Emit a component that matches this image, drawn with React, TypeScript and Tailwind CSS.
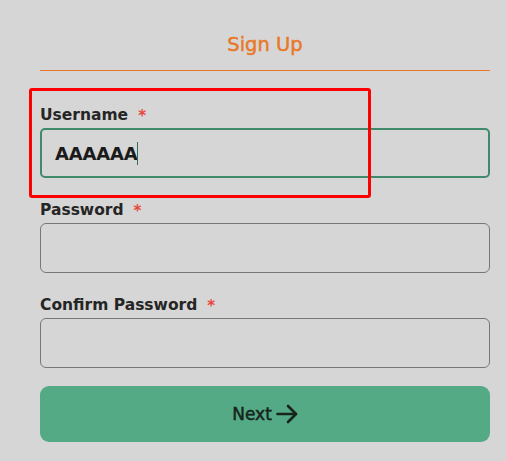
import React from 'react';

function Field({ label, children }: { label: string; children: React.ReactNode }) {
  return (
    <div className="flex flex-col">
      <div className="h-6 flex items-center text-[15.5px] font-semibold text-[#252525]">
        {label}
        <span className="ml-[10px] text-[15px] text-[#e8453c]">*</span>
      </div>
      {children}
    </div>
  );
}

export default function App() {
  return (
    <div className="relative min-h-screen bg-[#d6d6d6] font-['DejaVu_Sans',sans-serif]">
      <div className="ml-10 w-[450px] pt-[31px]">
        <h1 className="h-7 leading-7 text-center text-[19.5px] text-[#e8792a] [-webkit-text-stroke:0.5px_#e8792a]">
          Sign Up
        </h1>
        <div className="mt-[11px] h-px bg-[#e8792a]" />

        <div className="mt-[33px] flex flex-col gap-[21px]">
          <Field label="Username">
            <div className="h-[50px] rounded-[5px] border-2 border-[#3e8a6b] pl-[13px] flex items-center">
              <span className="text-[18px] font-bold text-[#1a1a1a] tracking-[-0.2px]">AAAAAA</span>
              <span className="w-px h-[23px] bg-[#2f6f55]" />
            </div>
          </Field>
          <Field label="Password">
            <div className="h-[50px] rounded-[6px] border border-[#777]" />
          </Field>
          <Field label="Confirm Password">
            <div className="h-[50px] rounded-[6px] border border-[#777]" />
          </Field>
        </div>

        <button className="mt-[18px] w-full h-[56px] rounded-[9px] bg-[#53aa85] flex items-center justify-center gap-[4px] text-[17px] text-[#16241c] [-webkit-text-stroke:0.5px_#16241c]">
          <span className="pt-[2px]">Next</span>
          <svg width="22" height="20" viewBox="0 0 22 20" fill="none" stroke="#16241c" strokeWidth="2.6" strokeLinecap="round" strokeLinejoin="round">
            <path d="M1.5 10H20" />
            <path d="M12 2l8 8-8 8" />
          </svg>
        </button>
      </div>

      <div className="absolute left-[29px] top-[88px] w-[342px] h-[110px] border-[3px] border-[#ff0000] rounded-[3px]" />
    </div>
  );
}
